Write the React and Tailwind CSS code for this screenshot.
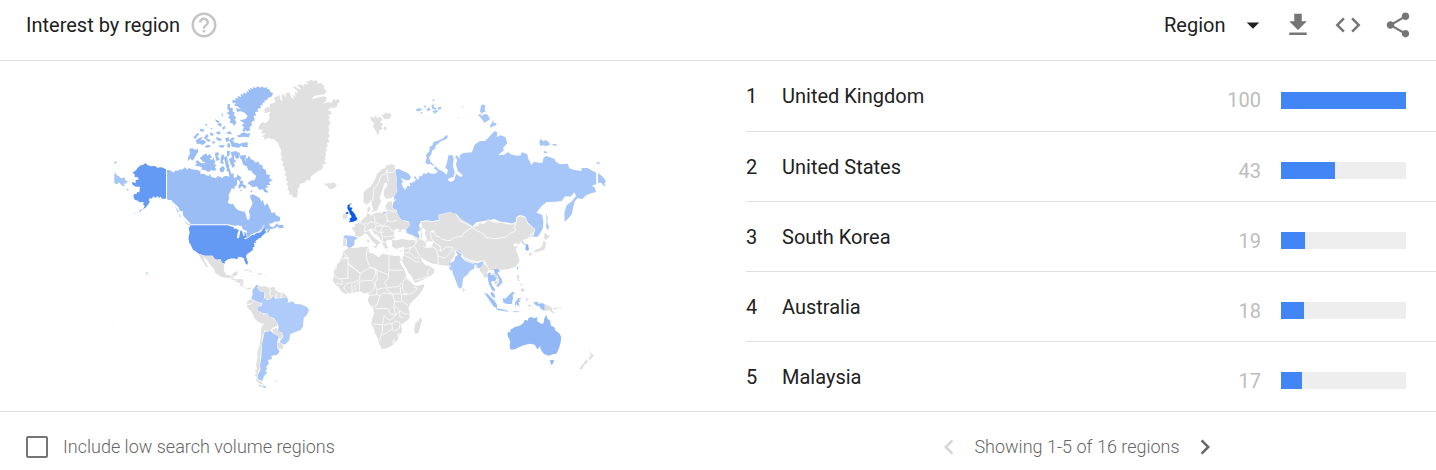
import React from 'react';
import {
  MdArrowDropDown,
  MdChevronLeft,
  MdChevronRight,
  MdCode,
  MdFileDownload,
  MdHelpOutline,
  MdShare,
} from 'react-icons/md';

const regions = [
  { name: 'United Kingdom', value: 100 },
  { name: 'United States', value: 43 },
  { name: 'South Korea', value: 19 },
  { name: 'Australia', value: 18 },
  { name: 'Malaysia', value: 17 },
];

// Each group of shapes has its own origin; three units are one unit of the map.
const mapGroups = [
  {
    origin: 'translate(100 70) scale(0.33333)',
    shapes: [
      // Alaska and the eastern tip of Russia
      ['#659af4', 'M104 313L97 308L108 301L113 293L122 286L130 284L137 279L142 285L152 289L165 288L172 293L185 292L198 298V386L186 386L182 380L176 384L174 378L165 384L161 378L155 386L150 384L146 391L150 395L143 404L138 412L132 416L128 420L134 408L129 402L132 396L118 397L114 392L104 389L100 378L103 371L109 373L112 366L118 367L120 350L107 350L96 343L97 336L108 339L106 331L117 328L112 321L104 322ZM128 417L122 423L116 426L121 420ZM110 425L104 430L100 431ZM140 398L147 401L142 406Z'],
      ['#a6c5f8', 'M43 307L50 315L56 318L62 325L74 322L75 330L83 334L80 340L70 341L76 348L66 347L57 337L52 343L43 340ZM43 274L50 277L49 281L43 280ZM79 355L88 361L82 362Z'],
      // Canada, mainland
      ['#9bbdf6', 'M201 299L210 301L221 308L227 301L235 303L238 298L246 299L255 292L261 299L268 293L272 297L292 300L303 305L300 312L313 311L318 316L327 318L329 310L333 320L347 325L352 319L361 320L366 325L372 319L380 318L388 320L386 307L379 301L383 292L390 297L393 311L400 310L402 324L410 322L413 311L419 325L411 332L411 345L402 352L407 357L395 355L391 365L386 375L387 387L383 397L390 403L399 401L407 414L415 421L426 424L435 426L439 440L443 451L449 447L449 431L446 424L453 411L458 400L452 386L450 377L459 373L470 379L480 385L484 396L489 389L493 407L502 400L510 416L515 429L524 427L528 436L541 442L539 454L523 455L516 460L500 463L490 466L484 472L498 463L508 462L510 469L520 472L532 459L535 466L549 464L551 473L538 475L533 469L524 475L510 478L508 485L499 490L501 483L507 477L494 480L490 472L475 485L460 493L449 500L440 497L438 484L429 478L424 467L407 468L397 466L384 463L273 463L265 454L250 438L248 424L240 423L235 411L226 403L222 399L213 390L204 390L201 386Z'],
      // Baffin, Banks, Victoria and the southern islands
      ['#9bbdf6', 'M431 256L439 255L435 270L445 278L444 258L450 261L452 271L460 270L466 280L474 274L481 286L487 284L488 295L498 301L499 313L510 315L508 325L518 330L507 337L511 345L500 345L504 353L495 353L506 368L493 366L488 357L478 360L470 349L458 352L449 344L442 340L452 332L464 330L469 318L460 311L454 302L445 301L440 288L430 285L425 270L420 264L421 256ZM410 319L418 317L425 323L419 331L431 334L428 342L440 348L434 356L425 348L419 356L414 350L420 339ZM417 360L426 359L424 364ZM453 360L459 365L452 366Z'],
      ['#9bbdf6', 'M436 265L450 265L470 280L486 300L492 315L505 330L498 348L480 352L462 342L466 330L471 318L457 303L444 290Z'],
      ['#9bbdf6', 'M268 237L277 234L285 239L294 237L294 246L287 257L282 267L276 272L271 265L264 274L264 262L270 251ZM299 264L307 259L311 268L306 258L318 250L322 257L330 252L336 263L328 266L337 270L340 262L346 277L342 281L350 287L343 292L350 298L342 303L335 299L325 306L316 300L303 299L308 292L294 289L285 287L291 280L285 275L293 271L304 280L324 279L309 275ZM345 248L354 247L358 253L352 259L360 268L350 274L346 261ZM363 258L370 252L374 265L368 272L372 282L361 280ZM381 242L390 243L388 257L381 260ZM369 287L375 295L370 307L361 306L358 296ZM392 246L409 243L415 252L403 256L402 267L410 275L401 277L405 287L398 294L392 281L386 268L396 262Z'],
      ['#9bbdf6', 'M308 283L326 270L340 274L345 290L340 301L318 301L306 294ZM372 262L380 258L384 275L388 290L385 302L378 292ZM404 246L420 248L418 262L411 268L405 262Z'],
      // Ellesmere, Axel Heiberg and the Queen Elizabeth islands
      ['#9bbdf6', 'M397 90L407 91L406 84L416 85L412 77L424 82L421 71L431 74L429 67L439 72L440 64L447 66L444 57L452 61L450 53L460 58L458 51L467 54L473 49L480 53L489 49L491 55L500 51L502 58L508 56L510 65L519 69L516 79L504 84L500 91L491 91L495 98L484 96L489 104L480 105L483 113L472 117L475 125L465 125L468 136L460 139L465 151L452 157L457 166L448 170L450 181L442 185L437 177L433 185L427 182L432 171L425 166L433 160L419 151L437 147L443 138L434 128L424 124L411 125L408 115L423 118L411 108L402 107L408 98L398 99ZM383 103L390 101L389 113L399 114L396 124L405 127L400 135L409 142L403 149L410 157L402 168L397 160L389 158L392 149L384 142L391 136L380 130L388 123L382 117ZM423 190L433 187L442 191L451 188L447 202L430 200L414 202L411 196L420 195ZM398 202L405 207L397 211L404 218L413 219L418 222L429 218L443 217L443 231L431 232L424 227L416 233L395 230L393 221L387 211Z'],
      ['#9bbdf6', 'M405 95L425 81L450 62L480 54L505 60L515 72L498 86L488 100L474 115L464 128L460 145L452 163L446 182L433 181L437 162L430 151L445 145L446 132L432 120L412 106ZM386 107L397 120L404 146L405 160L394 156L388 132Z'],
      ['#9bbdf6', 'M345 148L352 151L358 153L356 160L349 156ZM352 163L360 158L366 164L361 171ZM364 129L370 134L367 140ZM368 171L377 168L374 177L367 179ZM377 188L391 184L396 193L386 192ZM348 187L360 184L362 192L352 193ZM301 176L314 179L310 185L300 183ZM315 163L323 162L319 169ZM279 203L292 190L299 190L286 206ZM287 211L298 204L309 201L302 211L312 210L319 217L306 226L301 221L291 222ZM312 203L321 192L326 199L319 205L333 211L325 216ZM331 187L340 191L339 198L330 195ZM348 200L365 207L362 214L350 209ZM375 205L387 202L387 213L379 216ZM384 218L391 222L389 235L381 229ZM337 213L347 217L338 223ZM355 226L374 226L370 233L359 232ZM314 228L326 224L333 230L318 233ZM331 173L340 177L333 178Z'],
      ['#9bbdf6', 'M218 392L225 399L219 397ZM228 394L234 402L229 405ZM225 409L237 425L234 428ZM238 430L243 440L239 440ZM251 450L264 462L276 466L271 468L258 460Z'],
      ['#e2e2e2', 'M433 467L439 466L438 470Z'],
    ],
  },
  {
    origin: 'translate(180 70) scale(0.33333)',
    shapes: [
      // Greenland and Iceland
      ['#e0e0e0', 'M281 84L293 78L299 75L300 88L308 94L304 77L310 72L318 83L317 70L329 67L333 81L343 88L338 72L347 82L344 66L354 70L350 60L339 53L345 48L355 57L364 58L351 46L363 43L374 51L370 41L386 44L378 34L389 34L390 29L403 33L407 29L414 36L409 41L425 39L428 46L435 47L431 53L440 65L432 73L418 75L403 77L394 88L418 82L433 79L440 83L439 93L425 101L447 96L453 99L461 87L467 91L474 87L480 95L471 101L474 109L460 114L454 112L443 121L453 123L454 133L443 134L451 143L442 149L452 157L447 168L438 176L451 180L440 187L450 198L441 205L450 215L439 220L444 229L433 235L442 239L435 247L439 256L429 260L439 267L431 271L440 281L427 281L429 291L424 300L414 302L408 309L397 312L391 322L392 331L379 331L372 340L360 340L359 350L352 357L354 366L350 383L338 381L335 373L328 376L328 363L322 359L325 349L318 341L326 336L316 330L322 317L312 316L321 306L310 299L316 292L305 285L313 276L302 269L308 261L301 253L305 240L297 229L298 220L287 214L285 208L273 206L265 203L251 210L254 201L245 200L258 190L242 190L249 180L235 178L237 167L247 157L258 159L264 154L270 142L266 135L272 125L251 130L256 123L249 122L262 110L270 113L269 101L279 100L287 95Z'],
      ['#e0e0e0', 'M258 165L275 140L275 112L300 96L345 92L400 95L443 118L446 150L446 200L437 240L434 270L424 292L385 327L355 345L348 379L332 370L326 345L318 310L308 270L304 240L290 210L256 198L262 186L246 174Z'],
      ['#e0e0e0', 'M433 339L443 342L443 334L449 341L460 337L466 340L471 346L463 353L453 358L443 354L444 348L437 347Z'],
    ],
  },
  {
    origin: 'translate(100 210) scale(0.33333)',
    shapes: [
      // Lower 48 states, Mexico and Central America
      ['#659af4', 'M274 46H383L391 49L403 52L411 57L417 62L435 62L438 75L440 80L456 76L467 70L480 66L488 53L494 56L498 67L490 75L484 79L486 82L478 84L472 89L466 93L469 98L462 98L464 109L458 113L459 120L451 126L442 131L438 138L441 150L444 157L442 164L437 161L433 151L431 144L424 142L416 140L411 148L400 145L386 147L376 153L373 161L366 158L361 147L354 149L345 148L338 137H315L296 131L286 124L279 119L272 104L268 98L265 83L269 69L266 53Z'],
      ['#fff', 'M401 51L412 45L420 48L427 53L421 57L411 54L402 57ZM415 64L421 60L420 68L417 84L411 85L412 73ZM425 60L437 60L443 68L433 66L434 77L430 77ZM431 85L443 82L452 76L449 81L437 88ZM452 74L467 69L464 74Z'],
      ['#e0e0e0', 'M296 133L314 137H337L344 148L354 151L361 150L366 158L373 164L371 180L379 194L394 197L401 188L414 183L412 193L405 199L397 198L391 205L380 203L367 202L355 195L345 188L343 180L331 164L321 150L309 139L313 151L326 174L317 168L308 154L299 140ZM392 207L399 198L402 207L423 207L430 211L428 226L434 232L441 236L452 232L453 238L440 238L427 229L419 226L421 219L413 217L407 215L403 211Z'],
      ['#e9e9e9', 'M427 181L439 177L450 181L464 188L455 187L444 183ZM469 191L479 188L490 193L480 196L475 194ZM451 195L460 196L455 198ZM496 194L502 195L498 198Z'],
      // South America
      ['#a9c7f8', 'M468 226L475 224L472 234L480 244L493 246L492 263L485 279L473 276L454 266L458 252L457 241Z'],
      ['#e0e0e0', 'M476 226L484 230L494 228L507 233L524 231L526 239L535 247L550 248L563 260L558 263L542 263L530 265L519 256L509 267L498 267L493 256L493 246L478 242L473 233ZM452 267L464 272L474 278L485 281L477 292L472 301L478 306L489 310L492 324L489 342L473 335L463 324L455 306L441 292L442 284L440 276ZM491 313L505 312L506 319L521 327L532 339L532 348L517 354L512 362L496 363L490 350ZM516 360L530 353L534 362L547 370L548 380L542 388L534 381L521 370ZM534 397L542 399L552 408L547 418L534 415ZM487 345L493 353L494 366L487 382L486 400L483 417L480 448L479 476L473 490L472 509L484 515L489 524L481 523L468 512L471 502L463 495L470 491L465 483L471 477L468 465L473 442L471 430L478 408L483 378L483 360ZM472 522L489 528L492 533L478 530Z'],
      ['#aecbfa', 'M487 267L496 264L500 270L511 268L520 257L526 266L541 265L553 264L560 261L565 270L563 278L577 274L586 282L601 283L621 291L627 300L621 314L611 323L609 349L602 360L586 366L571 372L568 390L557 403L549 403L538 395L550 381L547 368L534 363L536 350L532 338L522 325L507 319L504 311L488 309L473 302L473 293L486 286Z'],
      ['#a6c5f8', 'M494 366L512 363L522 372L536 381L532 395L532 415L539 424L532 434L514 437L516 447L504 450L507 461L499 469L501 478L495 484L502 486L491 500L487 513L473 507L474 493L481 481L480 465L484 440L486 404L489 388ZM488 517L490 526L501 532L491 534Z'],
      ['#e6e6e6', 'M524 512L533 510L533 514L526 515ZM398 271L402 271L401 274ZM38 336L42 338L39 339Z'],
      ['#a9c7f8', 'M138 186L143 189L142 194L138 192Z'],
    ],
    borders: ['M450 77L469 68L483 65L491 50', 'M398 206L404 199M405 214L414 206M417 222L424 216', 'M506 234L512 243L508 251L514 261M530 249L528 264M545 249L542 264', 'M442 284L453 282L463 272'],
  },
  {
    origin: 'translate(320 95) scale(0.33333)',
    shapes: [
      // Arctic islands
      ['#e0e0e0', 'M151 65L163 68L167 61L172 70L182 65L187 75L180 80L190 88L183 95L189 101L179 105L174 122L169 111L163 101L158 92L164 85L154 79ZM183 58L191 60L196 52L204 58L209 53L215 62L207 72L193 72ZM192 93L201 98L197 107L191 104Z'],
      ['#a9c8fa', 'M288 43L299 39L307 43L300 48L290 49ZM310 34L319 31L317 39ZM319 43L328 37L332 45L323 49ZM334 31L344 27L340 36L350 39L347 44L337 42ZM337 49L350 45L355 49L343 56ZM353 37L366 35L362 43L355 45ZM334 16L342 13L344 19ZM300 52L307 50L306 57ZM425 35L430 36L428 40ZM414 66L418 67L416 70Z'],
      ['#a6c5f8', 'M316 201L320 189L318 179L328 169L329 156L338 151L339 142L350 138L360 134L371 129L376 122L382 121L383 128L375 134L363 138L354 146L347 152L344 163L337 166L334 178L327 189L332 201L345 213L337 211L330 207L321 208Z'],
      ['#a6c5f8', 'M483 32L489 28L496 32L494 42L496 51L489 51L485 57L480 49ZM474 59L481 58L485 63L494 57L503 59L510 73L504 77L493 83L486 73ZM510 94L517 81L521 75L521 84L530 84L528 91L519 94L513 99ZM658 137L664 132L669 139L677 135L687 142L690 149L680 153L668 151L661 153L659 145ZM695 147L704 147L714 150L705 153ZM670 170L676 168L683 175L674 175ZM829 199L835 203L840 201L838 207L831 206Z'],
      // Russia
      ['#a6c5f8', 'M226 224L237 222L250 229L265 235L273 246L268 256L257 256L242 249L250 261L244 265L249 277L256 284L262 273L271 274L269 265L282 261L288 254L281 247L285 243L294 256L299 243L306 244L310 235L322 237L321 231L336 237L349 235L353 228L341 220L347 214L355 223L370 230L380 239L384 225L376 219L382 199L385 181L398 181L401 193L399 214L404 232L400 246L387 250L383 256L393 261L403 255L408 236L423 247L428 240L413 228L408 207L412 194L405 186L411 181L419 192L420 180L430 174L456 172L458 165L464 149L480 138L495 138L505 128L515 117L525 108L532 112L530 126L542 121L556 126L562 145L549 159L552 165L534 181L552 179L565 171L571 178L591 182L602 181L605 171L622 178L624 190L634 209L643 200L655 203L668 203L670 190L677 183L690 187L704 192L708 201L720 208L743 206L748 220L763 225L784 228L785 219L803 219L820 229L829 233L829 268L815 272L824 277L828 291L813 295L798 301L788 312L772 310L763 321L758 345L754 360L743 372L734 380L733 353L740 331L756 319L768 303L764 292L751 305L736 303L725 318L706 320L680 321L665 333L649 353L666 359L670 378L669 399L661 413L653 425L639 425L644 410L646 402L636 394L623 382L617 366L602 360L592 363L590 379L576 386L560 382L543 381L523 372L506 376L486 379L469 382L458 394L445 389L433 388L421 381L415 366L405 360L390 350L376 355L355 359L357 374L337 379L320 376L303 379L297 391L301 405L293 411L299 422L296 431L277 421L260 414L258 401L270 391L266 379L244 374L233 359L231 346L217 339L220 322L230 313L222 314L223 303L232 288L229 268L230 250Z'],
      ['#a6c5f8', 'M834 234L846 243L852 250L858 259L853 266L857 275L849 271L845 264L834 263ZM679 354L683 367L682 383L687 397L684 406L678 396L680 378Z'],
      ['#a6c5f8', 'M188 351L197 350L199 355L189 356Z'],
      // Nordic and Baltic countries
      ['#e0e0e0', 'M224 211L215 207L207 211L199 211L196 219L187 222L179 230L171 237L167 250L159 264L150 277L139 283L130 293L131 305L130 321L139 329L150 321L155 314L155 327L161 349L171 347L178 330L184 318L179 307L184 294L189 279L192 266L200 262L202 272L191 287L192 303L199 311L214 309L227 300L232 284L229 267L230 248L225 229ZM143 339L150 334L151 346L145 352L141 348ZM154 345L160 347L156 354ZM203 321L216 318L217 340L229 347L234 358L241 373L270 384L269 393L259 405L247 402L241 412L231 409L238 401L225 402L221 415L224 429L213 435L202 434L197 443L205 459L196 461L189 449L185 439L175 426L160 413L154 400L147 403L149 411L160 426L173 436L183 443L174 448L171 459L166 447L152 433L142 418L134 415L128 421L120 426L105 422L105 411L94 399L106 395L102 389L111 386L122 380L130 370L139 365L141 355L149 357L152 362L164 355L179 352L199 359L200 349L196 334Z'],
      // British Isles
      ['#e0e0e0', 'M70 356L77 352L83 359L81 370L67 371L68 363Z'],
      ['#0b5bea', 'M83 330L91 327L88 337L98 338L94 346L99 350L106 359L108 366L112 369L110 376L100 380L86 382L91 376L88 371L95 367L93 361L89 357L88 350L84 344L82 339ZM78 352L85 351L84 357L78 356ZM91 325H94V328H91Z'],
    ],
    borders: ['M205 222L197 235L183 243L178 258L171 271L161 282L160 299L158 318', 'M199 225L201 238L205 260', 'M202 233L218 232L226 224', 'M830 232V270'],
  },
  {
    origin: 'translate(320 200) scale(0.33333)',
    shapes: [
      // Iberia
      ['#a9c7fb', 'M71 107L81 106L101 109L113 113L103 122L103 134L95 141L87 144L80 138L81 117L71 114Z'],
      ['#e0e0e0', 'M70 116L80 118L77 128L79 138L69 138Z'],
      ['#e0e0e0', 'M142 117L148 120L146 130L142 128ZM157 139L168 138L167 145ZM197 151L209 152L202 154ZM238 154L248 150L244 155Z'],
      // Turkey, Levant, Iran, Arabia
      ['#e0e0e0', 'M215 120L230 121L248 116L265 121L285 120L302 125L306 137L319 143L336 139L341 125L325 123L316 128L320 141L304 138L302 126L286 117L277 107L296 115L306 122L303 113L303 96L297 87L307 81L303 67L319 64L339 66L359 61L357 45L376 42L385 36L409 41L421 54L434 63L450 72L460 80L450 90L440 97L437 109L421 113L414 123L400 130L412 140L403 151L406 161L397 177L390 187L392 202L382 197L364 195L349 193L333 190L322 184L305 174L299 168L307 185L316 195L333 200L344 209L342 219L328 230L309 239L286 249L280 241L275 229L265 218L257 202L247 186L247 175L252 164L252 147L254 141L237 143L229 147L217 140Z'],
      ['#fff', 'M303 90L310 84L318 91L314 102L321 116L317 127L306 119L307 105ZM334 95L340 89L343 95L338 98Z'],
      // Africa
      ['#e0e0e0', 'M71 153L87 143L104 144L122 141L143 140L147 148L146 157L162 162L176 172L187 161L206 165L227 168L240 167L244 182L238 183L248 201L256 216L258 231L269 242L278 253L290 258L312 253L313 259L302 279L286 296L271 310L265 326L269 340L268 356L254 367L242 374L246 386L245 398L236 405L233 420L218 435L203 444L185 447L179 434L174 417L166 401L162 387L154 372L157 353L163 341L158 323L146 309L143 299L149 285L142 277L133 281L121 274L107 277L88 279L76 282L64 274L56 261L46 254L38 241L43 228L41 213L49 197L60 182L65 171ZM302 350L306 363L300 381L296 398L287 403L282 391L286 369L295 363Z'],
    ],
    borders: [
      'M71 158L87 176L58 176V187L49 188V206L40 212',
      'M84 176V235L57 237L44 226M84 192L121 220L150 202L141 180L139 156L146 142M84 188L121 220',
      'M87 175L72 171M150 202L170 210L207 226M207 165V210L247 211M207 210L204 236L194 247L202 264L218 261L235 260L249 246L256 233L270 244',
      'M150 202L166 206L166 225L157 241L119 243L118 276M121 220L118 239L99 248L81 250L71 264L83 280M119 243L105 258L106 277M95 254L97 278M66 240L67 253L49 251',
      'M157 241L165 252L160 268L146 281M170 209L172 238L163 250M165 252L170 269L194 263L218 283L224 303L221 319L226 344L212 344L203 326H179L165 326',
      'M170 271L170 284L149 287M170 284L180 286L171 315L158 322M181 286L190 279L218 282L242 281L241 260M249 250L247 267L262 281L244 283L245 302L265 317M245 283L261 283L279 279L292 265L279 259M225 304L243 305M224 318L239 331L252 342L267 342',
      'M158 372L188 374L192 348L209 361L226 348L238 333L240 351L251 355M188 374L186 399L179 420M192 375L203 372L216 371L228 363L240 368L238 386L224 392L214 389L202 397L188 405M216 372L217 387',
      'M218 424L222 419L225 426L219 431ZM234 401L239 402L238 407L233 406Z',
      'M118 66L137 77L132 94L151 92L164 89L169 76L162 68L150 65L144 73L133 69M163 46L166 66L189 78L203 62L199 46M171 78L192 78L208 80L216 93L239 91M200 62L215 65L232 61M196 28L213 33L226 36M189 78L181 94L187 109L203 111L222 107M164 90L178 98L190 96M169 102L179 112L178 124L189 134M187 109L187 127L207 128',
      'M253 146L265 144L283 139L291 120M253 159L265 157L272 142M253 166L271 174L288 187L299 184M267 157L290 176L298 169M285 140L292 154L299 168M286 240L308 235L326 229L321 215L332 204',
      'M307 138L319 143L338 141L349 148L353 165L355 195M353 168L376 174L395 155L397 141L379 141L361 154L352 149M363 154L360 138L342 127L334 115L331 94L341 95L349 109L363 111L378 117L387 128L395 130M392 128L402 123L384 121L389 109L410 107L422 112M395 140L412 149',
      'M278 107L295 118M283 120L292 131',
    ],
  },
  {
    origin: 'translate(440 200) scale(0.33333)',
    shapes: [
      // China, Mongolia, Central Asia
      ['#e0e0e0', 'M0 45L16 41L30 37L49 43L61 63L78 65L97 80L113 76L118 68L132 71L144 59L160 66L185 67L203 72L222 72L231 66L230 53L243 47L257 52L262 70L273 79L285 84L283 94L277 99L279 109L262 116L249 119L252 128L261 132L266 137L258 137L247 133L241 124L237 134L225 128L219 137L226 140L235 138L227 148L234 165L239 184L227 200L209 206L186 210L166 205L161 210L148 211L137 199L137 187L128 182L114 187L96 183L74 178L63 164L46 152L42 143L25 132L8 123L0 118Z'],
      ['#e0e0e0', 'M77 179L93 186L104 187L98 190L79 184ZM130 187L137 198L147 209L140 218L147 230L150 247L144 239L143 231L134 234L128 222L118 210L123 199ZM107 194L115 196L116 207L107 203ZM67 263L73 267L75 274L69 275Z'],
      // Japan, Taiwan, Philippines
      ['#e0e0e0', 'M315 97L322 105L331 108L323 114L318 120L311 115ZM311 122L318 128L316 143L310 151L300 152L291 157L282 155L274 161L285 150L299 145L307 137ZM267 158L276 160L273 168L266 166ZM231 224L239 228L236 238L241 243L235 243L230 235ZM238 249L247 253L244 258ZM246 264L255 268L250 277L241 272Z'],
      ['#a9c7fb', 'M232 199L236 201L233 211L230 206Z'],
      ['#8ab2f7', 'M258 134L264 133L267 149L261 153L256 147Z'],
      // India
      ['#acc9fb', 'M27 190L42 184L46 170L54 165L47 154L57 151L65 159L63 170L77 184L99 191L106 188L113 190L131 183L128 193L121 203L115 205L112 196L104 193L102 207L92 211L83 223L70 234L66 260L61 267L54 260L47 241L39 223L37 210L32 212L27 202L34 200Z'],
      // South-East Asia
      ['#9dc0f9', 'M143 221L151 217L153 225L163 224L170 235L166 243L157 243L153 246L157 257L165 267L163 276L156 270L147 253L144 238ZM161 207L175 206L180 213L172 218L185 237L187 248L174 261L168 257L178 248L177 238L164 219Z'],
      ['#9dc0f9', 'M154 275L163 281L166 294L157 290L151 281ZM133 278L143 282L155 294L165 304L171 314L171 325L160 319L151 305L142 292ZM187 295L196 296L209 283L218 275L225 280L218 284L219 296L215 312L203 312L191 309ZM168 325L186 328L199 331L209 335L189 333L171 330ZM228 304L234 295L246 295L237 300L241 306L235 306L239 320L229 313L227 323L225 310ZM214 334L226 334L241 335L228 337ZM259 294L263 298L260 307ZM280 307L293 305L296 312L305 309L314 313L314 332L303 327L298 319L287 316ZM260 315L273 315L271 318Z'],
      ['#e0e0e0', 'M162 219L173 226L178 238L171 238L164 228L153 221ZM160 246L176 240L176 249L166 255ZM315 313L330 319L339 327L335 330L348 341L337 338L327 330L315 332ZM340 325L352 321L353 325L343 329Z'],
      // Australia and New Zealand
      ['#91b7f7', 'M211 389L225 381L239 377L251 368L254 359L264 362L265 354L275 351L281 355L292 352L291 363L304 372L311 369L312 358L319 344L323 357L330 362L333 377L343 382L347 392L358 400L364 412L361 431L356 447L349 461L337 463L327 467L312 462L305 453L301 446L302 438L292 448L284 434L269 431L251 436L236 442L225 448L212 449L209 439L211 425L203 408L203 396L211 397ZM330 480L342 480L339 491L333 494Z'],
      ['#e0e0e0', 'M446 451L454 461L463 466L454 475L446 482L447 471L453 469ZM440 477L444 485L433 495L426 508L417 506L429 492Z'],
      ['#eeeeee', 'M354 324L360 320L366 325L362 326ZM413 358L419 361L415 361ZM465 370L470 367L469 372ZM420 388L424 392L420 391ZM366 329L372 331L368 332Z'],
    ],
    borders: ['M0 116L19 121L30 122L42 113L67 109L71 99L96 82L110 92L132 102L138 112L161 116L196 112L211 100L228 92L222 82L229 72', 'M97 80L113 77L119 68L132 71L144 59L161 66L187 67L203 72L223 72L230 66L229 53L243 47L257 52', 'M97 80L61 63L49 43', 'M46 150L65 161L74 174L96 182L113 186L132 181L140 195L149 210', 'M263 116L270 106L282 98'],
  },
];

function WorldMap() {
  return (
    <svg viewBox="109 61 500 350" className="w-full max-w-[500px]" role="img" aria-label="World map">
      {mapGroups.map((group) => (
        <g key={group.origin} transform={group.origin}>
          {group.shapes.map(([fill, d]) => (
            <path key={d} d={d} fill={fill} />
          ))}
          {(group.borders || []).map((d) => (
            <path key={d} d={d} fill="none" stroke="#f8f8f8" strokeWidth="3" strokeLinejoin="round" />
          ))}
        </g>
      ))}
    </svg>
  );
}

function IconButton({ label, children }) {
  return (
    <button type="button" aria-label={label} className="flex h-10 w-[50px] items-center justify-center text-[#757575]">
      {children}
    </button>
  );
}

function Header() {
  return (
    <header className="flex h-[61px] items-center border-b border-[#e0e0e0] pr-[13px] pb-[10px] pl-[26px]">
      <h2 className="text-xl text-[#212121]">Interest by region</h2>
      <button type="button" aria-label="Help" className="ml-[9px] text-[#c4c4c4]">
        <MdHelpOutline size={30} />
      </button>
      <div className="ml-auto flex items-center">
        <div className="grid items-center">
          <select
            aria-label="Resolution"
            className="col-start-1 row-start-1 w-[109px] appearance-none bg-transparent text-xl text-[#212121]"
          >
            <option>Region</option>
          </select>
          <MdArrowDropDown size={30} className="pointer-events-none col-start-1 row-start-1 mr-[5px] justify-self-end text-[#212121]" />
        </div>
        <IconButton label="Download">
          <MdFileDownload size={30} />
        </IconButton>
        <IconButton label="Embed">
          <MdCode size={30} />
        </IconButton>
        <IconButton label="Share">
          <MdShare size={30} />
        </IconButton>
      </div>
    </header>
  );
}

function RegionRow({ rank, name, value }) {
  return (
    <li className="flex h-[70px] items-center border-t border-[#e0e0e0] pr-[30px] text-xl text-[#212121] first:border-t-0">
      <span className="w-9">{rank}</span>
      <span className="flex-1">{name}</span>
      <div className="flex items-center gap-5 pt-2">
        <span className="text-[#bdbdbd]">{value}</span>
        <div className="h-[17px] w-[125px] bg-[#eeeeee]">
          <div className="h-full bg-[#4285f4]" style={{ width: `${value}%` }} />
        </div>
      </div>
    </li>
  );
}

function Footer() {
  return (
    <footer className="grid h-[59px] grid-cols-2 items-center border-t border-[#e0e0e0] pt-3 text-lg font-light text-[#666666]">
      <label className="flex items-center gap-[15px] pl-[26px]">
        <input type="checkbox" className="size-[22px] appearance-none rounded-xs border-2 border-[#757575] bg-white" />
        Include low search volume regions
      </label>
      <nav className="flex items-center justify-center gap-[10px]">
        <button type="button" aria-label="Previous" disabled className="text-[#d5d5d5]">
          <MdChevronLeft size={30} />
        </button>
        <span>Showing 1-5 of 16 regions</span>
        <button type="button" aria-label="Next">
          <MdChevronRight size={30} />
        </button>
      </nav>
    </footer>
  );
}

export default function App() {
  return (
    <main className="bg-white font-[Roboto,sans-serif]">
      <Header />
      <div className="grid grid-cols-2">
        <div className="flex items-center justify-center">
          <WorldMap />
        </div>
        <ol className="pl-7">
          {regions.map((region, index) => (
            <RegionRow key={region.name} rank={index + 1} {...region} />
          ))}
        </ol>
      </div>
      <Footer />
    </main>
  );
}
